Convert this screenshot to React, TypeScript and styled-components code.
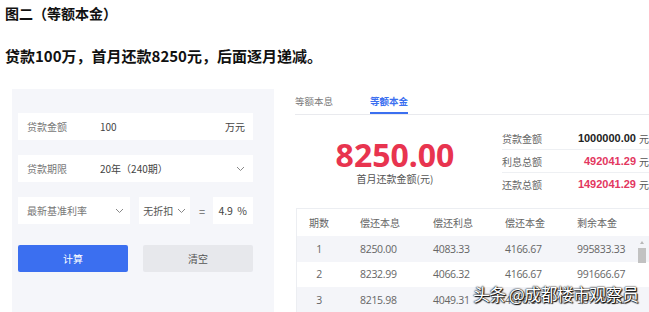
import React from "react"
import styled, { createGlobalStyle } from "styled-components"

const GlobalStyle = createGlobalStyle`
  html, body {
    margin: 0;
    padding: 0;
    background: #fff;
    overflow: hidden;
  }
  body {
    font-family: "Noto Sans CJK SC", "Noto Sans", sans-serif;
    color: #333;
  }
`

const schedule = [
  { n: 1, pay: "8250.00", interest: "4083.33", principal: "4166.67", left: "995833.33" },
  { n: 2, pay: "8232.99", interest: "4066.32", principal: "4166.67", left: "991666.67" },
  { n: 3, pay: "8215.98", interest: "4049.31", principal: "4166.67", left: "987500.00" },
]

const Chevron = () => (
  <svg width="9" height="6" viewBox="0 0 9 6" fill="none">
    <path d="M1 1l3.5 3.5L8 1" stroke="#888" strokeWidth="1" />
  </svg>
)

export default function App() {
  return (
    <Page lang="zh-CN">
      <GlobalStyle />
      <Heading>
        图二<Paren>（</Paren>等额本金<Paren>）</Paren>
      </Heading>
      <SubHeading>贷款100万，首月还款8250元，后面逐月递减。</SubHeading>
      <Calculator>
        <FormPanel>
          <Field>
            <FieldLabel>贷款金额</FieldLabel>
            <FieldValue>100</FieldValue>
            <FieldUnit>万元</FieldUnit>
          </Field>
          <Field>
            <FieldLabel>贷款期限</FieldLabel>
            <FieldValue>
              20年<Paren>（</Paren>240期<Paren>）</Paren>
            </FieldValue>
            <Chevron />
          </Field>
          <RateRow>
            <Select width={117}>
              <span>最新基准利率</span>
              <Chevron />
            </Select>
            <Select width={53} compact>
              <span>无折扣</span>
              <Chevron />
            </Select>
            <Equals>=</Equals>
            <RateInput>
              <span>4.9</span>
              <span>%</span>
            </RateInput>
          </RateRow>
          <Buttons>
            <Button primary>计算</Button>
            <Button>清空</Button>
          </Buttons>
        </FormPanel>
        <ResultPanel>
          <TabBar>
            <Tab>等额本息</Tab>
            <Tab active>等额本金</Tab>
          </TabBar>
          <Summary>
            <FirstPayment>
              <BigNumber>8250.00</BigNumber>
              <Caption>首月还款金额(元)</Caption>
            </FirstPayment>
            <Totals>
              <TotalRow>
                <TotalLabel>贷款金额</TotalLabel>
                <TotalValue>1000000.00</TotalValue>
                <TotalUnit>元</TotalUnit>
              </TotalRow>
              <TotalRow>
                <TotalLabel>利息总额</TotalLabel>
                <TotalValue red>492041.29</TotalValue>
                <TotalUnit>元</TotalUnit>
              </TotalRow>
              <TotalRow last>
                <TotalLabel>还款总额</TotalLabel>
                <TotalValue red>1492041.29</TotalValue>
                <TotalUnit>元</TotalUnit>
              </TotalRow>
            </Totals>
          </Summary>
          <Table>
            <HeadRow>
              <Cell center>期数</Cell>
              <Cell>偿还本息</Cell>
              <Cell>偿还利息</Cell>
              <Cell>偿还本金</Cell>
              <Cell>剩余本金</Cell>
            </HeadRow>
            <Body>
              {schedule.map((r, i) => (
                <BodyRow key={r.n} striped={i % 2 === 0}>
                  <Cell center num>{r.n}</Cell>
                  <Cell num>{r.pay}</Cell>
                  <Cell num>{r.interest}</Cell>
                  <Cell num>{r.principal}</Cell>
                  <Cell num>{r.left}</Cell>
                </BodyRow>
              ))}
              <Scrollbar>
                <ScrollArrow />
                <ScrollThumb />
              </Scrollbar>
            </Body>
          </Table>
          <Watermark>头条 @成都楼市观察员</Watermark>
        </ResultPanel>
      </Calculator>
    </Page>
  )
}

const Page = styled.div`
  width: 649px;
  height: 312px;
  padding-left: 5px;
  box-sizing: border-box;
  overflow: hidden;
`

// full-width brackets keep their em box, as in the source page
const Paren = styled.span`
  display: inline-block;
  width: 1em;
  text-align: center;
`

const Heading = styled.div`
  margin-top: 3px;
  font-size: 14px;
  line-height: 20px;
  font-weight: bold;
  color: #111;
`

const SubHeading = styled.div`
  margin-top: 23px;
  font-size: 15px;
  line-height: 20px;
  font-weight: bold;
  color: #111;
`

const Calculator = styled.div`
  display: flex;
  margin-top: 23px;
  margin-left: 7px;
  gap: 21px;
`

const FormPanel = styled.div`
  width: 262px;
  height: 223px;
  box-sizing: border-box;
  padding: 24px 21px 0 6px;
  background: #f5f6fa;
  display: flex;
  flex-direction: column;
  gap: 15px;
`

const Field = styled.div`
  height: 27px;
  background: #fff;
  display: flex;
  align-items: center;
  padding: 0 8px 0 9px;
  font-size: 10px;
`

const FieldLabel = styled.span`
  width: 73px;
  color: #777;
`

const FieldValue = styled.span`
  flex: 1;
  color: #444;
`

const FieldUnit = styled.span`
  color: #444;
`

const RateRow = styled.div`
  display: flex;
  align-items: center;
  height: 27px;
`

const Select = styled.div<{ width: number; compact?: boolean }>`
  width: ${(p) => p.width}px;
  height: 27px;
  box-sizing: border-box;
  background: #fff;
  display: flex;
  align-items: center;
  justify-content: ${(p) => (p.compact ? "flex-start" : "space-between")};
  gap: 4px;
  padding: ${(p) => (p.compact ? "0 0 0 4px" : "0 6px 0 9px")};
  margin-right: 9px;
  font-size: 10px;
  color: ${(p) => (p.compact ? "#555" : "#777")};
`

const Equals = styled.span`
  width: 15px;
  font-size: 11px;
  color: #666;
`

const RateInput = styled.div`
  width: 41px;
  height: 27px;
  box-sizing: border-box;
  background: #fff;
  display: flex;
  align-items: center;
  justify-content: space-between;
  padding: 0 6px 0 5px;
  font-size: 10.5px;
  color: #444;
`

const Buttons = styled.div`
  display: flex;
  gap: 15px;
  margin-top: 6px;
`

const Button = styled.div<{ primary?: boolean }>`
  width: 110px;
  height: 27px;
  display: flex;
  align-items: center;
  justify-content: center;
  font-size: 10px;
  border-radius: 2px;
  background: ${(p) => (p.primary ? "#3b6ff0" : "#e7e8ec")};
  color: ${(p) => (p.primary ? "#fff" : "#555")};
`

const ResultPanel = styled.div`
  position: relative;
  flex: 1;
  padding-top: 1px;
`

const TabBar = styled.div`
  display: flex;
  gap: 37px;
  border-bottom: 1px solid #e9eaee;
`

const Tab = styled.div<{ active?: boolean }>`
  height: 22px;
  line-height: 22px;
  font-size: 9.5px;
  border-bottom: 2px solid ${(p) => (p.active ? "#3b6ff0" : "transparent")};
  color: ${(p) => (p.active ? "#3b6ff0" : "#777")};
  font-weight: ${(p) => (p.active ? "bold" : "normal")};
`

const Summary = styled.div`
  display: flex;
  height: 93px;
  align-items: flex-start;
`

const FirstPayment = styled.div`
  width: 200px;
  padding-top: 25px;
  display: flex;
  flex-direction: column;
  align-items: center;
`

const BigNumber = styled.div`
  font-family: "Noto Sans", sans-serif;
  font-size: 32px;
  line-height: 30px;
  font-weight: bold;
  color: #e8344f;
`

const Caption = styled.div`
  font-size: 10px;
  line-height: 12px;
  margin-top: 3px;
  color: #555;
`

const Totals = styled.div`
  flex: 1;
  padding: 12px 0 0 7px;
`

const TotalRow = styled.div<{ last?: boolean }>`
  display: flex;
  align-items: center;
  height: 22px;
  border-bottom: ${(p) => (p.last ? "none" : "1px solid #eef0f3")};
`

const TotalLabel = styled.span`
  flex: 1;
  font-size: 10px;
  color: #666;
`

const TotalValue = styled.span<{ red?: boolean }>`
  font-family: "Liberation Sans", sans-serif;
  font-size: 11px;
  font-weight: bold;
  color: ${(p) => (p.red ? "#e3375f" : "#222")};
`

const TotalUnit = styled.span`
  width: 13px;
  text-align: right;
  font-size: 10px;
  color: #555;
`

const Table = styled.div`
  margin-left: 1px;
  border-top: 1px solid #eceef2;
  border-left: 1px solid #eceef2;
`

const columns = "44px 73px 72px 72px 1fr"

const HeadRow = styled.div`
  display: grid;
  grid-template-columns: ${columns};
  height: 27px;
  align-items: center;
  background: #fff;
  font-size: 10px;
  color: #666;
`

const Body = styled.div`
  position: relative;
`

const BodyRow = styled.div<{ striped?: boolean }>`
  display: grid;
  grid-template-columns: ${columns};
  height: 25.5px;
  align-items: center;
  background: ${(p) => (p.striped ? "#f4f5f9" : "#fff")};
`

const Cell = styled.div<{ center?: boolean; num?: boolean }>`
  text-align: ${(p) => (p.center ? "center" : "left")};
  padding-left: ${(p) => (p.center ? 0 : 19)}px;
  font-family: ${(p) =>
    p.num ? '"Open Sans", "Liberation Sans", sans-serif' : "inherit"};
  font-size: ${(p) => (p.num ? 10.5 : 10)}px;
  letter-spacing: ${(p) => (p.num ? "-0.3px" : "0")};
  color: #666;
`

const Scrollbar = styled.div`
  position: absolute;
  top: 0;
  left: 340px;
  width: 9px;
  height: 76px;
  display: flex;
  flex-direction: column;
  align-items: center;
`

const ScrollArrow = styled.div`
  margin-top: 5px;
  width: 0;
  height: 0;
  border-left: 2px solid transparent;
  border-right: 2px solid transparent;
  border-bottom: 3px solid #b8b8b8;
`

const ScrollThumb = styled.div`
  margin-top: 4px;
  width: 8px;
  height: 15px;
  background: #c2c2c2;
`

const Watermark = styled.div`
  position: absolute;
  left: 178px;
  bottom: 9px;
  font-size: 17px;
  line-height: 20px;
  color: #fff;
  letter-spacing: -0.7px;
  text-shadow: 0 0 2px #000, 0 0 1px #000, 1px 1px 1px #000;
  white-space: nowrap;
`
